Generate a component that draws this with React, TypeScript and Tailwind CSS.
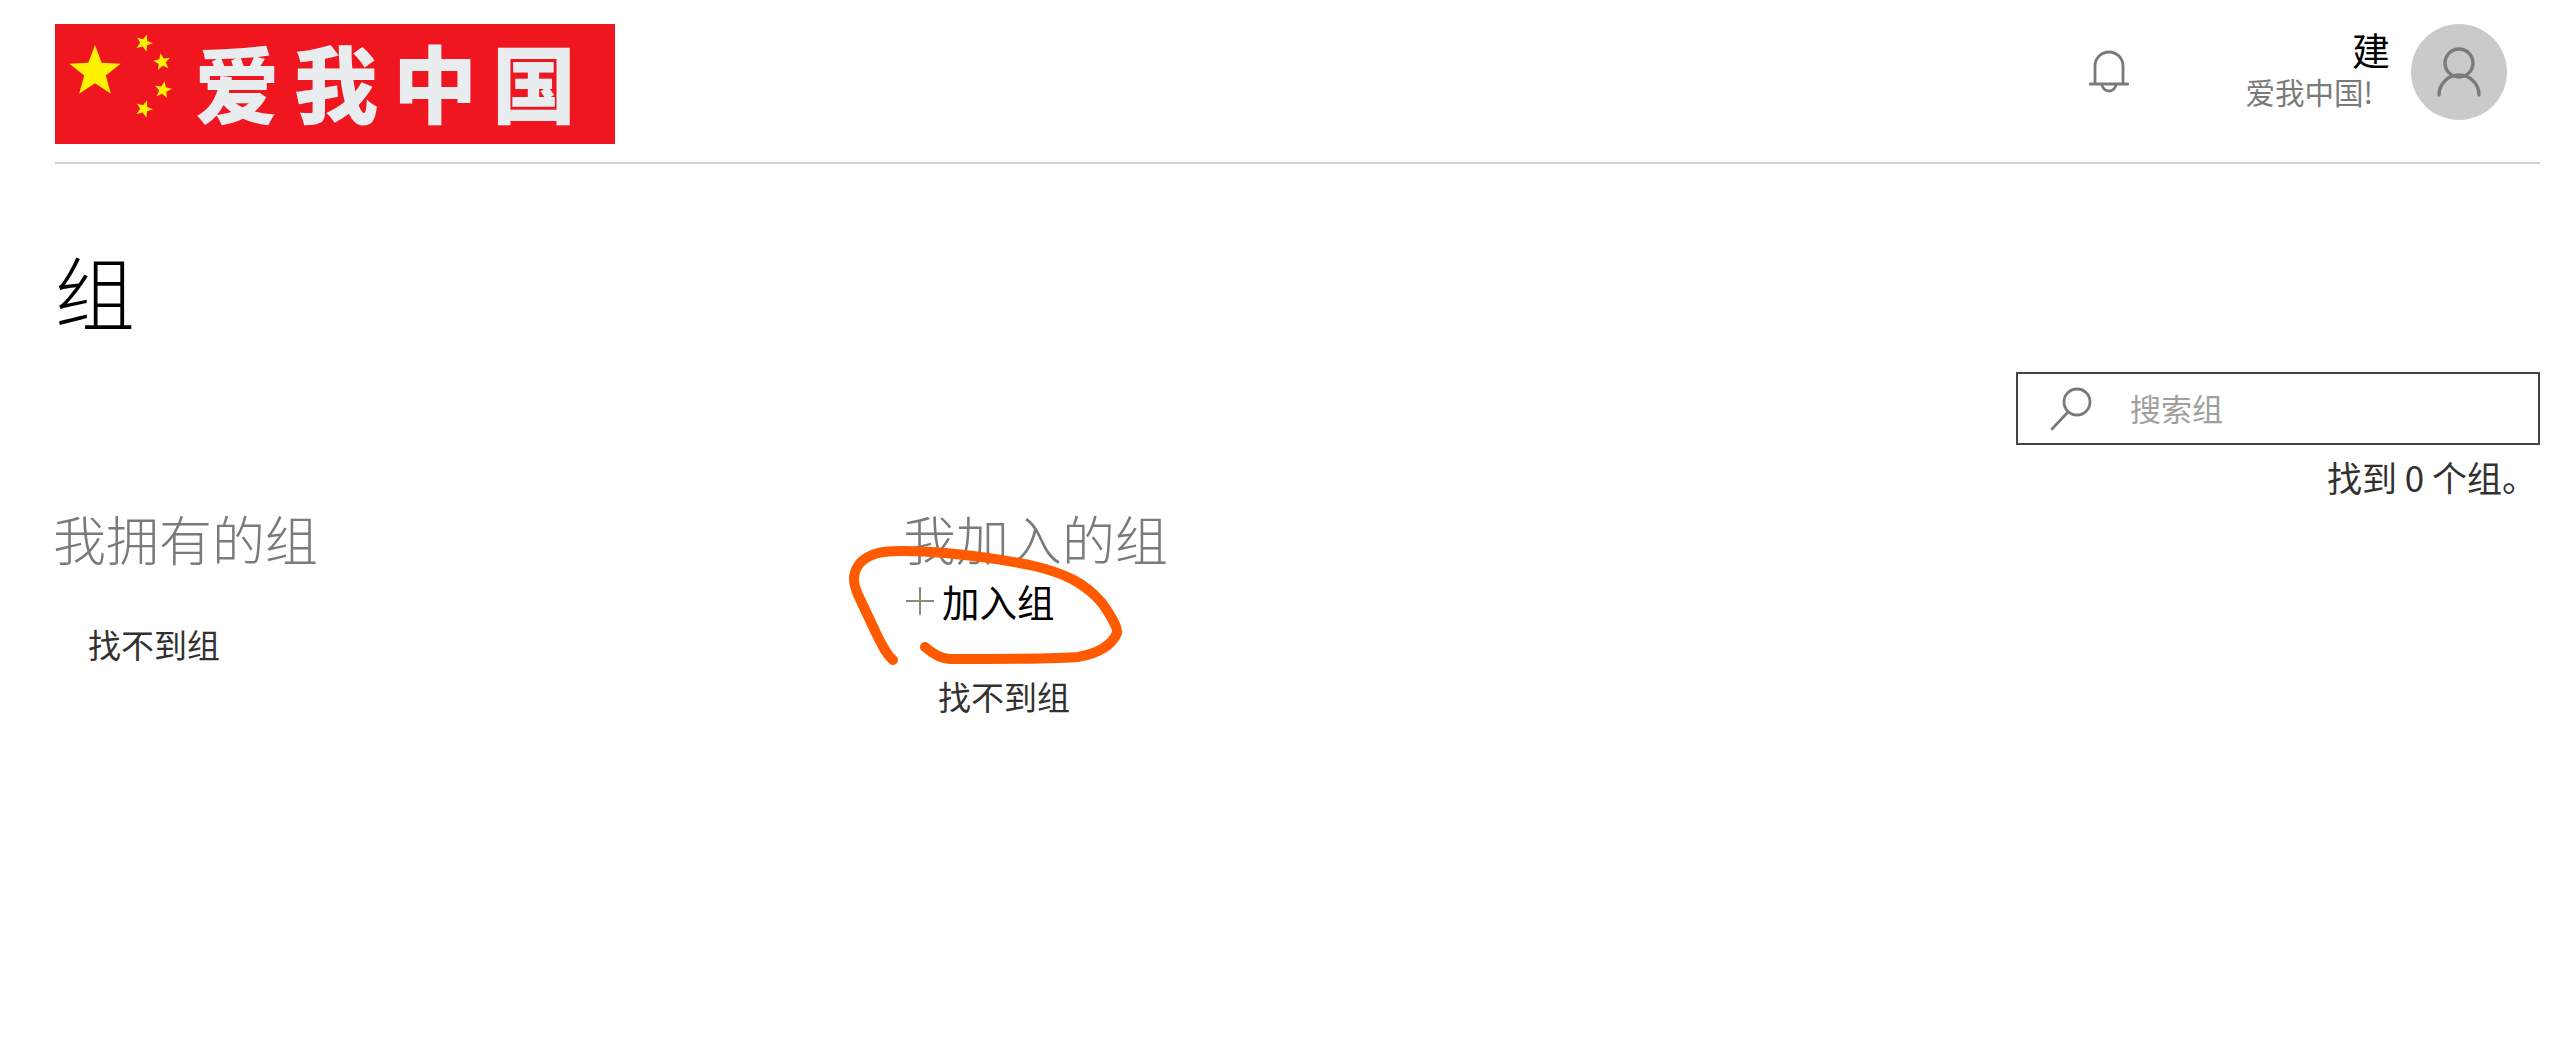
const FONT = "font-['Segoe_UI','Noto_Sans_CJK_SC','Noto_Sans',sans-serif]";

function Star({ x, y, r, rot = 0 }: { x: number; y: number; r: number; rot?: number }) {
  const pts = [];
  for (let i = 0; i < 10; i++) {
    const rad = i % 2 === 0 ? r : r * 0.42;
    const a = ((i * 36 - 90 + rot) * Math.PI) / 180;
    pts.push(`${x + rad * Math.cos(a)},${y + rad * Math.sin(a)}`);
  }
  return <polygon points={pts.join(" ")} fill="#fff200" />;
}

function Logo() {
  return (
    <div className="flex h-[120px] w-[560px] items-center bg-[#f0161f]">
      <svg width="140" height="120" viewBox="0 0 140 120" className="shrink-0">
        <Star x={40} y={48} r={27} />
        <Star x={89} y={19} r={9} rot={20} />
        <Star x={107} y={38} r={9} rot={-10} />
        <Star x={108} y={66} r={9} rot={10} />
        <Star x={89} y={85} r={9} rot={20} />
      </svg>
      <div className="flex gap-[15px] pb-[6px] text-[84px] leading-none font-black text-[#e9edf0]">
        <span>爱</span>
        <span>我</span>
        <span>中</span>
        <span>国</span>
      </div>
    </div>
  );
}

function BellIcon() {
  return (
    <svg width="40" height="46" viewBox="0 0 40 46" fill="none" stroke="#7a7a7a" strokeWidth="2.8" className="mt-[26px] mr-[116px]">
      <path d="M6 34 V16 A14 14 0 0 1 34 16 V34" />
      <path d="M1 34 H39" strokeLinecap="round" />
      <path d="M13 34 A7 7 0 0 0 27 34" />
    </svg>
  );
}

function PersonIcon() {
  return (
    <svg width="44" height="50" viewBox="0 0 44 50" fill="none" stroke="#7a7a7a" strokeWidth="3.4">
      <circle cx="22" cy="16" r="14" />
      <path d="M2 48 A20 20 0 0 1 42 48" strokeLinecap="round" />
    </svg>
  );
}

function SearchIcon() {
  return (
    <svg width="42" height="44" viewBox="0 0 42 44" fill="none" stroke="#7a7a7a" strokeWidth="2.8" className="shrink-0">
      <circle cx="27" cy="15" r="13" />
      <path d="M18 25 L2 42" strokeLinecap="round" />
    </svg>
  );
}

function Header() {
  return (
    <header className="flex h-[164px] items-start justify-between border-b-2 border-[#d0d3d4] pt-6">
      <Logo />
      <div className="flex items-start pr-[33px]">
        <BellIcon />
        <div className="mr-[21px] flex flex-col items-end">
          <span className="pt-[2px] text-[38px] leading-[46px] text-black">建</span>
          <span className="pr-[17px] text-[29.5px] leading-[38px] text-[#7a7a7a]">爱我中国!</span>
        </div>
        <div className="flex h-24 w-24 items-center justify-center rounded-full bg-[#cacaca]">
          <PersonIcon />
        </div>
      </div>
    </header>
  );
}

function SearchBox() {
  return (
    <div className="flex flex-col items-end pt-[33px]">
      <div className="flex h-[73px] w-[524px] items-center border-2 border-[#444] pl-[32px]">
        <SearchIcon />
        <span className="pl-[38px] text-[31px] text-[#a19f9d]">搜索组</span>
      </div>
      <p className="pt-[10px] pr-[3px] text-[35px] leading-[44px] text-[#323130]">找到 0 个组。</p>
    </div>
  );
}

function Scribble() {
  return (
    <svg className="pointer-events-none absolute top-[539px] left-[840px]" width="300" height="130" viewBox="0 0 300 130" fill="none">
      <path
        d="M53 121 C46 115 42 106 36 94 L20 60 C12 44 12 34 20 24 C30 14 42 12 62 12 C100 12 150 18 190 26 C225 34 245 44 262 64 C272 78 278 90 277 94 C272 106 260 114 238 118 C220 120 160 120 110 120 C100 120 92 114 85 108"
        stroke="#ff5a00"
        strokeWidth="10"
        strokeLinecap="round"
        strokeLinejoin="round"
      />
    </svg>
  );
}

export default function App() {
  return (
    <div className={`${FONT} relative h-[1044px] bg-white pr-5 pl-[55px]`}>
      <Header />
      <h1 className="pt-[75px] text-[80px] leading-[100px] font-light text-black">组</h1>
      <SearchBox />
      <div className="grid grid-cols-[850px_1fr] pt-[4px]">
        <section>
          <h2 className="-ml-[2px] text-[53px] leading-[70px] font-light text-[#7a7a7a]">我拥有的组</h2>
          <p className="pt-[49px] pl-[33px] text-[33px] leading-[44px] text-[#323130]">找不到组</p>
        </section>
        <section>
          <h2 className="-ml-[2px] text-[53px] leading-[70px] font-light text-[#7a7a7a]">我加入的组</h2>
          <div className="flex items-center pt-[5px]">
            <svg width="28" height="28" viewBox="0 0 28 28" stroke="#8a8a7a" strokeWidth="2" className="ml-[1px]">
              <path d="M0 14 H28 M14 0 V28" />
            </svg>
            <span className="pl-[8px] text-[37.5px] leading-[46px] text-black">加入组</span>
          </div>
          <p className="pt-[50px] pl-[33px] text-[33px] leading-[44px] text-[#323130]">找不到组</p>
        </section>
      </div>
      <Scribble />
    </div>
  );
}
